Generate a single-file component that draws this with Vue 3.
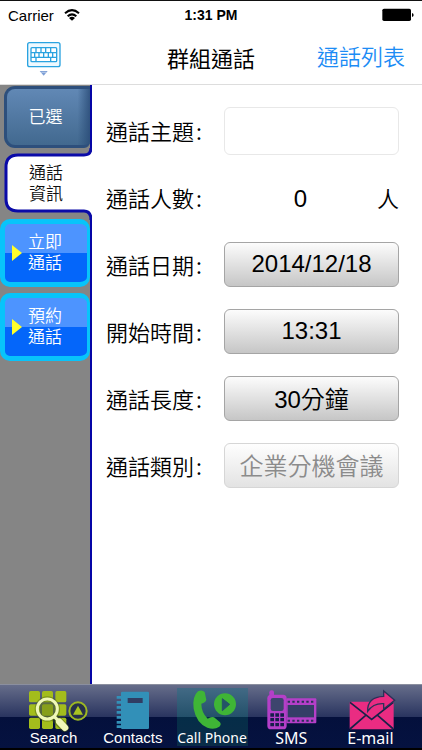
<script setup>
import { ref } from 'vue'

const topic = ref('')
const people = ref(0)
</script>

<template>
  <div class="screen">
    <div class="status">
      <span class="carrier">
        Carrier
        <svg class="wifi" viewBox="0 0 48 36" aria-hidden="true">
          <path d="M3 13Q24 -6 45 13" fill="none" stroke="#000" stroke-width="6" />
          <path d="M11 22Q24 10 37 22" fill="none" stroke="#000" stroke-width="6" />
          <path d="M24 35L15 27Q24 20 33 27Z" />
        </svg>
      </span>
      <span class="clock">1:31 PM</span>
      <svg class="battery" viewBox="0 0 96 40" aria-hidden="true">
        <rect x="1" y="1" width="86" height="37" rx="5" />
        <path d="M90 14q5 1 5 6t-5 6z" />
      </svg>
    </div>

    <header class="header">
      <button class="keyboard" type="button" aria-label="Keyboard">
        <svg viewBox="0 0 102 102" aria-hidden="true">
          <rect x="2" y="2" width="97" height="72" rx="6" fill="#eef9ff" stroke="#2aa3e0" stroke-width="4" />
          <g fill="#fff" stroke="#2aa3e0" stroke-width="4">
            <rect x="12" y="17" width="77" height="42" rx="3" />
            <path d="M12 32H89M12 46H89M27 17V32M42 17V32M56 17V32M71 17V32M23 32V46M36 32V46M50 32V46M64 32V46M77 32V46M27 46V59M71 46V59" fill="none" />
          </g>
          <path d="M38 87H62L50 101Z" fill="#7d9fd6" />
          <path d="M43 91H57" stroke="#d5e1f5" stroke-width="2" />
        </svg>
      </button>
      <h1 class="title">群組通話</h1>
      <a class="list-link" href="#list">通話列表</a>
    </header>

    <div class="body">
      <aside class="side">
        <button class="tab selected" type="button">已選</button>
        <button class="tab current" type="button">
          <svg class="outline" viewBox="0 0 92 72" aria-hidden="true">
            <path d="M92 0V72H91Q91 63 84 63H18Q6 63 6 51V19Q6 7 18 7H84Q91 7 91 0Z" fill="#fff" />
            <path d="M91 0Q91 7 84 7H18Q6 7 6 19V51Q6 63 18 63H84Q91 63 91 72" fill="none" stroke="#0a0aa8" stroke-width="3" />
          </svg>
          <span class="text">通話<br>資訊</span>
        </button>
        <button class="tab action" type="button">
          <svg class="arrow" viewBox="0 0 10 16" aria-hidden="true"><path d="M0 0L10 8L0 16Z" fill="#ffff2b" /></svg>
          <span>立即<br>通話</span>
        </button>
        <button class="tab action" type="button">
          <svg class="arrow" viewBox="0 0 10 16" aria-hidden="true"><path d="M0 0L10 8L0 16Z" fill="#ffff2b" /></svg>
          <span>預約<br>通話</span>
        </button>
      </aside>

      <form class="form" @submit.prevent>
        <div class="row">
          <label class="label" for="topic"><span>通話主題</span><span>:</span></label>
          <input id="topic" v-model="topic" class="field" type="text">
        </div>
        <div class="row">
          <label class="label" for="people"><span>通話人數</span><span>:</span></label>
          <span class="count">
            <output id="people">{{ people }}</output>
            <span class="unit">人</span>
          </span>
        </div>
        <div class="row">
          <label class="label" for="date"><span>通話日期</span><span>:</span></label>
          <button id="date" class="pick" type="button">2014/12/18</button>
        </div>
        <div class="row">
          <label class="label" for="start"><span>開始時間</span><span>:</span></label>
          <button id="start" class="pick" type="button">13:31</button>
        </div>
        <div class="row">
          <label class="label" for="length"><span>通話長度</span><span>:</span></label>
          <button id="length" class="pick" type="button">30分鐘</button>
        </div>
        <div class="row">
          <label class="label" for="kind"><span>通話類別</span><span>:</span></label>
          <button id="kind" class="pick" type="button" disabled>企業分機會議</button>
        </div>
      </form>
    </div>

    <nav class="bar">
      <a class="item" href="#search">
        <svg viewBox="42 33 237 132" aria-hidden="true">
          <g fill="#a3bd1c">
            <rect x="87" y="48" width="33" height="34" rx="5" />
            <rect x="126" y="48" width="33" height="34" rx="5" />
            <rect x="166" y="48" width="33" height="34" rx="5" />
            <rect x="87" y="88" width="33" height="34" rx="5" />
            <rect x="126" y="88" width="33" height="34" rx="5" />
            <rect x="166" y="88" width="33" height="34" rx="5" />
            <rect x="87" y="128" width="33" height="34" rx="5" />
            <rect x="126" y="128" width="33" height="34" rx="5" />
            <rect x="166" y="128" width="33" height="34" rx="5" />
          </g>
          <path d="M168 132L194 158" stroke="#3f5210" stroke-opacity=".5" stroke-width="26" stroke-linecap="round" />
          <circle cx="142" cy="102" r="31" fill="#71861b" fill-opacity=".55" stroke="#566b14" stroke-opacity=".5" stroke-width="14" />
          <circle cx="142" cy="102" r="30" fill="none" stroke="#f0f8b8" stroke-width="9" />
          <path d="M162 124L174 136" stroke="#f0f8b8" stroke-width="10" />
          <path d="M178 140L195 158" stroke="#f0f8b8" stroke-width="20" stroke-linecap="round" />
          <circle cx="234" cy="108" r="26" fill="#26304a" stroke="#9db823" stroke-width="6" />
          <path d="M234 92L249 119H219Z" fill="#a9c421" />
        </svg>
        <span class="name">Search</span>
      </a>
      <a class="item" href="#contacts">
        <svg viewBox="10 33 237 132" aria-hidden="true">
          <rect x="94" y="50" width="84" height="112" rx="4" fill="#3290b8" />
          <path d="M81 67H96M81 82H96M81 97H96M81 112H96M81 127H96M81 142H96M81 155H96" stroke="#3290b8" stroke-width="8" />
          <rect x="114" y="69" width="45" height="15" fill="#303d63" />
        </svg>
        <span class="name">Contacts</span>
      </a>
      <a class="item active" href="#call">
        <svg viewBox="247 33 237 132" aria-hidden="true">
          <path d="M322 49Q334 43 342 51L347 74Q346 82 332 86Q332 112 351 131Q363 123 370 127L388 142Q393 149 386 155Q370 166 350 158Q317 144 309 101Q304 65 322 49Z" fill="#3fb536" />
          <circle cx="403" cy="88" r="33" fill="#3fb536" />
          <path d="M395 71L417 88L395 107Z" fill="#245367" stroke="#245367" stroke-width="3" stroke-linejoin="round" />
        </svg>
        <span class="name narrow">Call Phone</span>
      </a>
      <a class="item" href="#sms">
        <svg viewBox="5 33 237 132" aria-hidden="true">
          <rect x="108" y="70" width="90" height="75" rx="3" fill="#b43fc8" />
          <rect x="112" y="90" width="79" height="37" fill="#343e66" />
          <path d="M112 80H194M112 137H194" stroke="#2a3158" stroke-width="6" stroke-dasharray="7 7" />
          <rect x="57" y="46" width="14" height="30" rx="6" fill="#b43fc8" />
          <rect x="51" y="59" width="58" height="104" rx="11" fill="#b43fc8" />
          <rect x="61" y="69" width="39" height="39" rx="7" fill="#3d456d" />
          <path d="M60 120H101M60 134H101M60 149H101" stroke="#171e4a" stroke-width="10" stroke-dasharray="11 4" />
        </svg>
        <span class="name wide">SMS</span>
      </a>
      <a class="item" href="#email">
        <svg viewBox="242 33 237 132" aria-hidden="true">
          <rect x="298" y="80" width="132" height="83" rx="3" fill="#ea2c82" />
          <path d="M299 82L364 133L429 82M299 162L346 121M429 162L382 121" fill="none" stroke="#192149" stroke-width="5" />
          <path d="M352 109Q350 66 400 64V48L433 76L400 102V86Q369 84 352 109Z" fill="#ea2c82" stroke="#2b3158" stroke-width="4" />
        </svg>
        <span class="name wide">E-mail</span>
      </a>
    </nav>
  </div>
</template>

<style>
body {
  margin: 0;
  background: #fff;
}
</style>

<style scoped>
.screen {
  display: flex;
  flex-direction: column;
  min-height: 100vh;
  box-sizing: border-box;
  border-top: 1px solid #111;
  background: #fff;
  color: #000;
  font-family: "Liberation Sans", "Noto Sans CJK TC", sans-serif;
}

button,
input {
  box-sizing: border-box;
  margin: 0;
  padding: 0;
  font: inherit;
  color: inherit;
}

.status {
  display: grid;
  grid-template-columns: 1fr auto 1fr;
  align-items: center;
  height: 28px;
  padding: 0 8px;
  font-size: 15px;
}

.carrier {
  display: flex;
  align-items: center;
  gap: 10px;
}

.wifi {
  width: 16px;
  height: 12px;
}

.clock {
  font-size: 14px;
  font-weight: bold;
}

.battery {
  justify-self: end;
  width: 32px;
  height: 14px;
}

.header {
  display: grid;
  grid-template-columns: 1fr auto 1fr;
  align-items: center;
  height: 56px;
  padding: 0 17px;
  border-bottom: 1px solid #ddd;
  box-sizing: border-box;
  font-size: 22px;
}

.keyboard {
  justify-self: start;
  padding: 4px 10px 0;
  border: 0;
  background: none;
}

.keyboard svg {
  display: block;
  width: 34px;
  height: 34px;
}

.title {
  margin: 0;
  font-size: 22px;
  font-weight: 400;
}

.list-link {
  justify-self: end;
  padding-bottom: 4px;
  color: #1c8cf5;
  text-decoration: none;
  font-weight: 350;
}

.body {
  display: flex;
  flex: 1;
}

.side {
  display: flex;
  flex-direction: column;
  flex: none;
  width: 92px;
  box-sizing: border-box;
  border-right: 2px solid #0505a6;
  background: #858585;
}

.tab {
  border: 0;
  color: #fff;
  font-size: 17px;
  font-weight: 350;
  line-height: 21px;
}

.selected {
  height: 62px;
  margin: 1px 0 0 4px;
  padding-right: 6px;
  border: 3px solid #2d4f7c;
  border-right: 0;
  border-radius: 11px 0 6px 11px;
  background: linear-gradient(90deg, transparent 85%, #284a76cc), linear-gradient(#6188b5, #42698f);
}

.current {
  position: relative;
  height: 72px;
  margin-right: -2px;
  background: #858585;
  color: #111;
}

.outline {
  position: absolute;
  inset: 0;
  width: 92px;
  height: 72px;
}

.text {
  position: relative;
}

.action {
  display: flex;
  align-items: center;
  gap: 6px;
  height: 68px;
  margin-bottom: 6px;
  padding-left: 7px;
  border: 5px solid #08c4fa;
  border-right-width: 3px;
  border-radius: 10px;
  background: linear-gradient(#4d94ff 50%, #0466fa 50%);
}

.current + .action {
  margin-top: -1px;
  position: relative;
}

.arrow {
  width: 10px;
  height: 16px;
}

.form {
  flex: 1;
  min-width: 0;
  padding: 12px 23px 0 14px;
  font-size: 24px;
  font-weight: 350;
}

.row {
  display: grid;
  grid-template-columns: 96px 1fr;
  column-gap: 22px;
  align-items: center;
  height: 67px;
}

.label {
  display: flex;
  justify-content: space-between;
  padding-bottom: 2px;
  font-size: 22px;
  white-space: nowrap;
}

.label span:last-child {
  font-family: "Noto Sans CJK TC", sans-serif;
}

.field {
  width: 100%;
  height: 48px;
  padding: 0 10px;
  border: 1px solid #e8e8e8;
  border-radius: 6px;
  background: #fff;
}

.count {
  display: grid;
  grid-template-columns: 22px 1fr 22px;
  align-items: baseline;
  padding-bottom: 2px;
}

.count output {
  grid-column: 1 / 3;
  text-align: center;
}

.unit {
  font-size: 22px;
}

.pick {
  height: 45px;
  padding-bottom: 2px;
  border: 1px solid #a5a5a5;
  border-radius: 6px;
  background: linear-gradient(#fcfcfc, #c6c6c6);
}

.pick:disabled {
  border-color: #d6d6d6;
  background: linear-gradient(#fefefe, #e3e3e3);
  color: #8b8b8b;
}

.bar {
  display: flex;
  height: 66px;
  padding: 0 12px 0 14px;
  box-sizing: border-box;
  border-top: 1px solid #8b8f9f;
  border-bottom: 2px solid #000;
  background: linear-gradient(#666d8a, #2a3560 50%, #04103c 50%, #051240);
}

.item {
  display: flex;
  flex: 1;
  flex-direction: column;
  align-items: center;
  padding-top: 1px;
  color: #fff;
  text-decoration: none;
}

.item svg {
  flex: none;
  width: 79px;
  height: 44px;
  overflow: visible;
}

.active {
  background: linear-gradient(#426a85, #23506a 50%, #052d48 50%, #0a2c48) center / 71px 58px no-repeat;
}

.name {
  font-size: 15px;
  line-height: 16px;
  white-space: nowrap;
}

.narrow {
  font-family: "Noto Sans", sans-serif;
  font-size: 14px;
}

.wide {
  font-family: "Noto Sans", sans-serif;
  font-size: 16px;
}
</style>
